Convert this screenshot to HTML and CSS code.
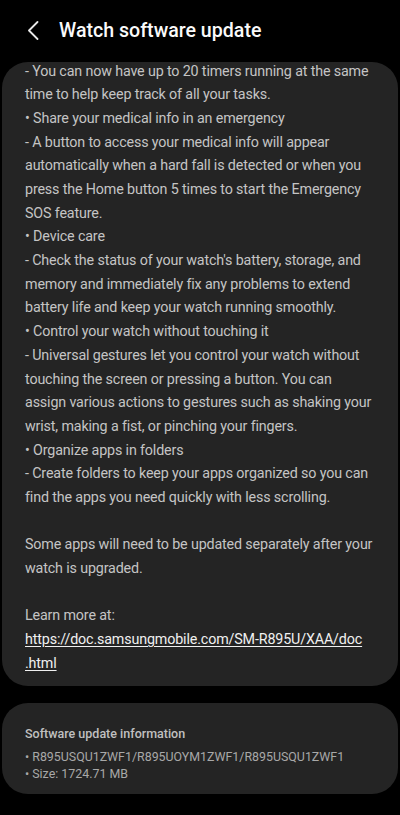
FILE: index.html
```html
<!DOCTYPE html>
<html lang="en">
<head>
<meta charset="utf-8">
<title>Watch software update</title>
<link rel="stylesheet" href="styles.css">
</head>
<body>
<div class="screen">
  <header class="appbar">
    <button class="back" aria-label="Back">
      <svg width="12" height="19" viewBox="0 0 12 19"><path d="M10.5 1 L2 9.5 L10.5 18" fill="none" stroke="#e8e8e8" stroke-width="1.8" stroke-linecap="round" stroke-linejoin="round"/></svg>
    </button>
    <h1 class="title">Watch software update</h1>
  </header>

  <section class="card notes">
    <div class="notes-text">
      <p>- You can now have up to 20 timers running at the same time to help keep track of all your tasks.</p>
      <p>• Share your medical info in an emergency</p>
      <p>- A button to access your medical info will appear automatically when a hard fall is detected or when you press the Home button 5 times to start the Emergency SOS feature.</p>
      <p>• Device care</p>
      <p>- Check the status of your watch's battery, storage, and memory and immediately fix any problems to extend battery life and keep your watch running smoothly.</p>
      <p>• Control your watch without touching it</p>
      <p>- Universal gestures let you control your watch without touching the screen or pressing a button. You can<br>assign various actions to gestures such as shaking your wrist, making a fist, or pinching your fingers.</p>
      <p>• Organize apps in folders</p>
      <p>- Create folders to keep your apps organized so you can find the apps you need quickly with less scrolling.</p>
      <p class="gap">Some apps will need to be updated separately after your watch is upgraded.</p>
      <p class="gap">Learn more at:</p>
      <p><a class="link" href="#">https://doc.samsungmobile.com/SM-R895U/XAA/doc<br>.html</a></p>
    </div>
  </section>

  <section class="card info">
    <h2 class="info-title">Software update information</h2>
    <p class="info-line">• R895USQU1ZWF1/R895UOYM1ZWF1/R895USQU1ZWF1</p>
    <p class="info-line">• Size: 1724.71 MB</p>
  </section>
</div>
</body>
</html>
```

FILE: styles.css
```css
html, body {
  margin: 0;
  padding: 0;
  background: #000;
}
body {
  font-family: Roboto, "Noto Sans", sans-serif;
  color: #c4c4c4;
}
.screen {
  width: 400px;
  height: 815px;
  overflow: hidden;
  display: flex;
  flex-direction: column;
}
.appbar {
  height: 62px;
  flex: none;
  display: flex;
  align-items: center;
  padding-left: 27px;
  box-sizing: border-box;
}
.back {
  background: none;
  border: 0;
  padding: 0;
  width: 12px;
  height: 19px;
  display: flex;
  margin-top: -1px;
}
.title {
  margin: -1px 0 0 20px;
  font-size: 19.6px;
  font-weight: 500;
  color: #fafafa;
}
.card {
  background: #242424;
  border-radius: 26px;
  margin: 0 2px;
  flex: none;
}
.notes {
  height: 624px;
  box-sizing: border-box;
  padding: 0 18px 0 23px;
}
.notes-text {
  margin-top: -2.4px;
  font-size: 14.3px;
  letter-spacing: -0.15px;
  line-height: 23.68px;
}
.notes-text p {
  margin: 0;
}
.notes-text p.gap {
  margin-top: 23.68px;
}
.link {
  color: #f0f0f0;
  text-decoration: underline;
  text-underline-offset: 2px;
}
.info {
  margin-top: 17px;
  height: 91px;
  box-sizing: border-box;
  padding: 22px 18px 0 23px;
}
.info-title {
  margin: 0 0 6px;
  font-size: 12.5px;
  font-weight: 500;
  color: #c0c0c0;
  line-height: 18px;
}
.info-line {
  margin: 0;
  font-size: 12.4px;
  line-height: 16.5px;
  color: #a8a8a8;
}
```
